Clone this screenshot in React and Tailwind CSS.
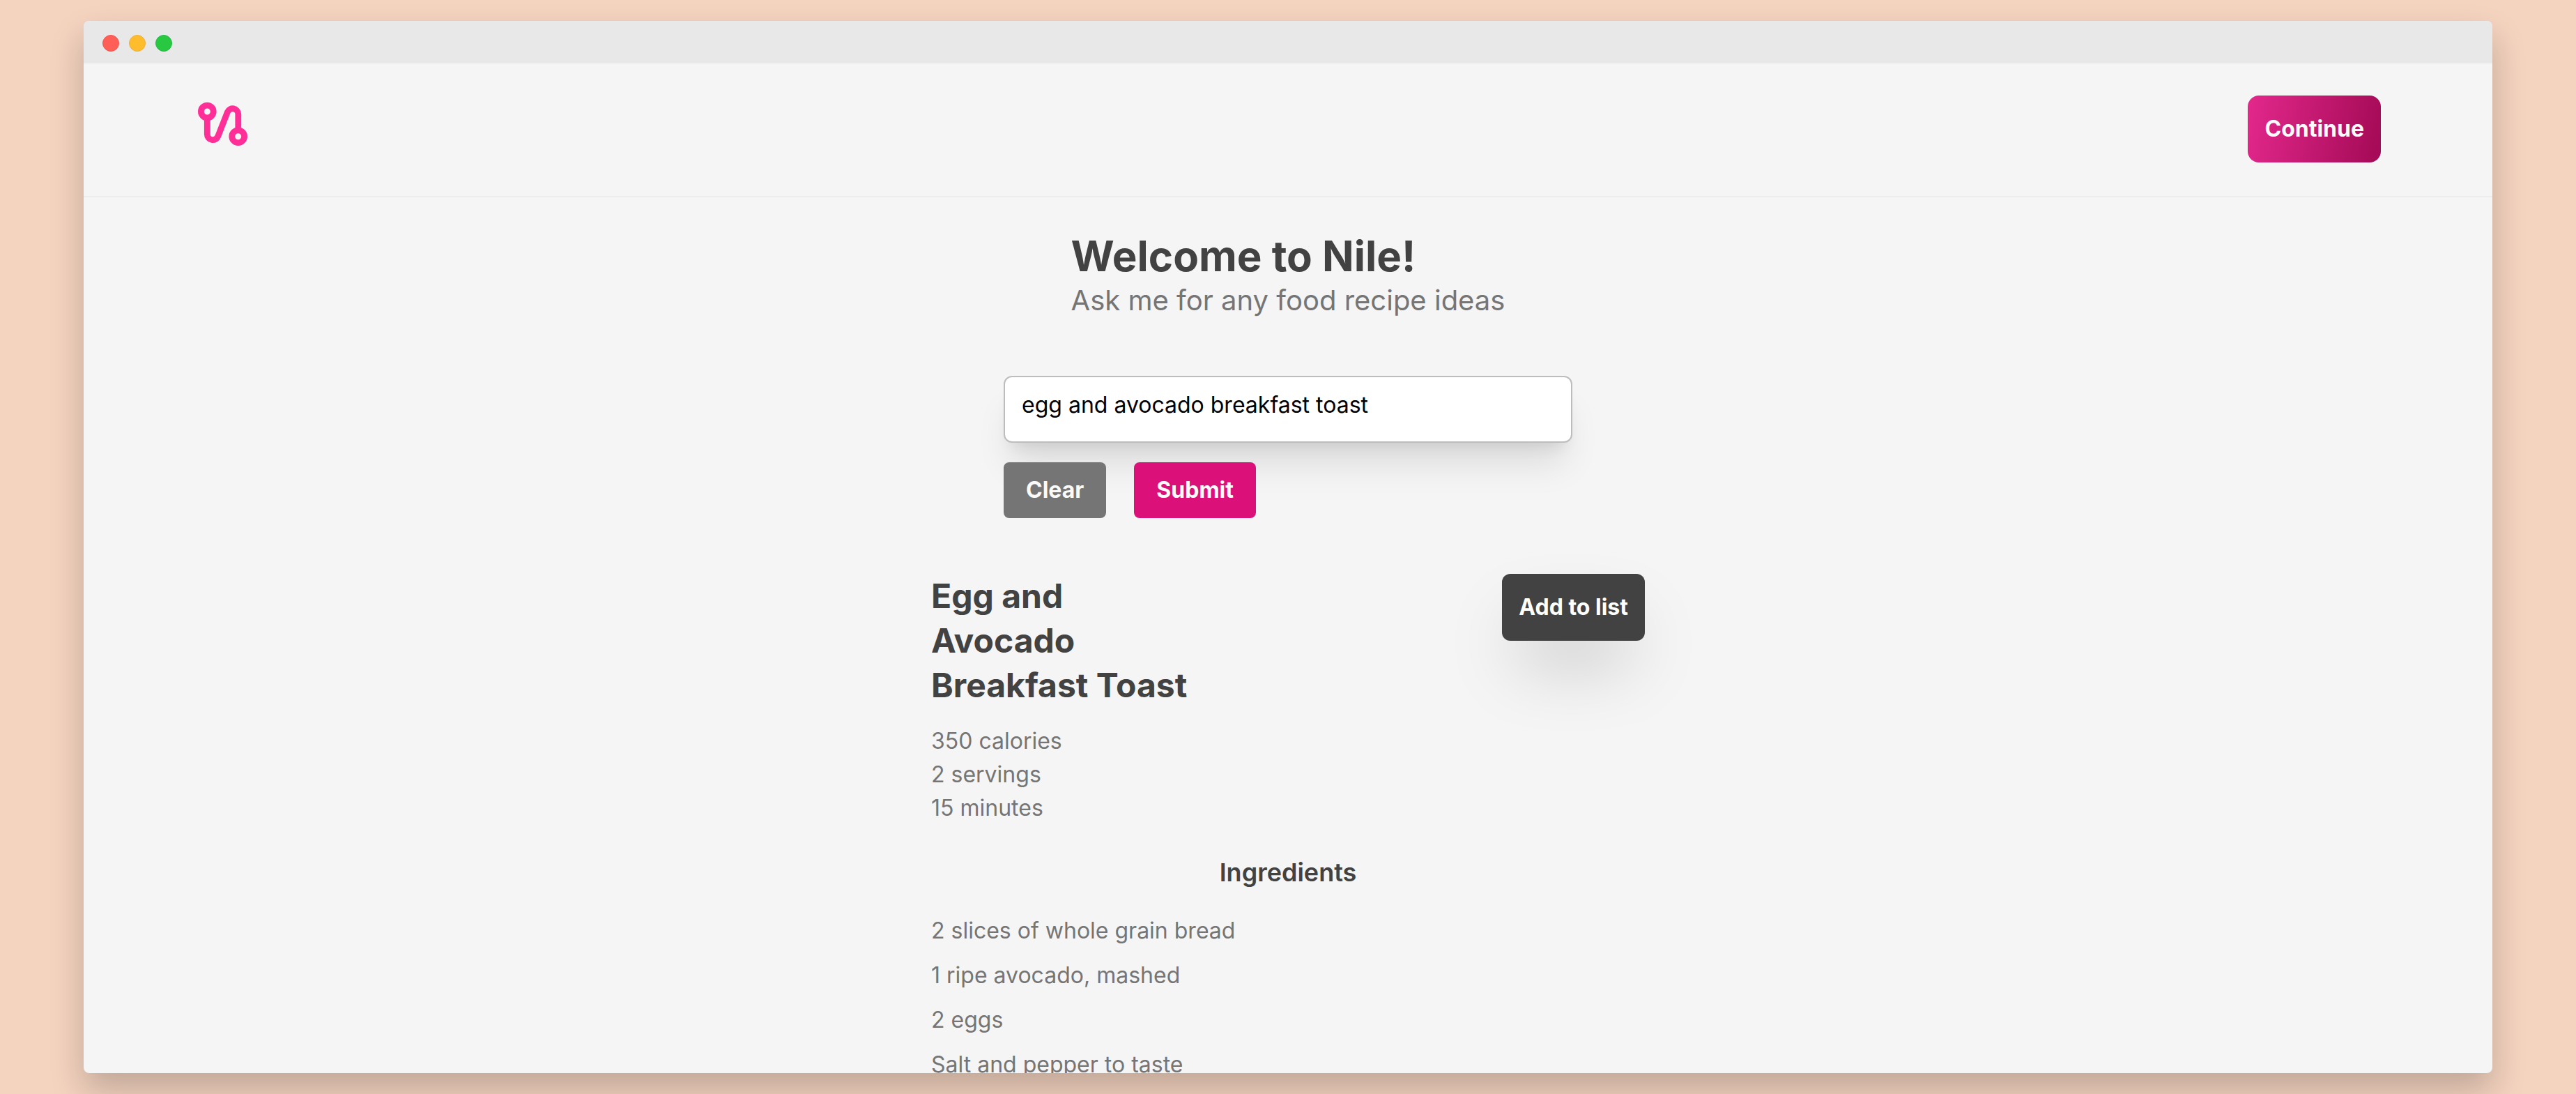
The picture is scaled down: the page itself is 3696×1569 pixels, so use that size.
import { useState } from "react";

const recipe = {
  title: "Egg and Avocado Breakfast Toast",
  facts: ["350 calories", "2 servings", "15 minutes"],
  ingredients: [
    "2 slices of whole grain bread",
    "1 ripe avocado, mashed",
    "2 eggs",
    "Salt and pepper to taste",
  ],
};

function Logo() {
  return (
    <svg
      className="w-20 h-20"
      viewBox="-4 -9 80 80"
      fill="none"
      stroke="#ff2f97"
      strokeWidth="8.8"
      role="img"
      aria-label="Nile"
    >
      <circle cx="13.3" cy="14" r="8.9" />
      <circle cx="57.7" cy="49.7" r="8.9" />
      <path d="M13.3 23V46.6A8 8 0 0 0 28.8 49.4L42.5 14.5A8 8 0 0 1 57.8 17.4V41" />
    </svg>
  );
}

function TitleBar() {
  return (
    <div className="flex shrink-0 h-[61px] bg-[#e8e8e8] pt-5 pl-[27px] gap-[14px]">
      <span className="h-6 w-6 rounded-full bg-[#ff5f57] border border-[#f0564e]" />
      <span className="h-6 w-6 rounded-full bg-[#ffbd2e] border border-[#eeaf3c]" />
      <span className="h-6 w-6 rounded-full bg-[#28c940] border border-[#22b948]" />
    </div>
  );
}

function Header() {
  return (
    <header className="flex shrink-0 justify-between items-start px-40 pt-[46px] pb-12 border-b-2 border-[#eeeeee]">
      <Logo />
      <button className="rounded-2xl px-6 py-6 font-bold text-[#fafafa] bg-linear-[100deg] from-[#e3288c] to-[#a30a55]">
        Continue
      </button>
    </header>
  );
}

function PromptForm() {
  const [prompt, setPrompt] = useState("egg and avocado breakfast toast");

  const handleSubmit = (event) => {
    event.preventDefault();
  };

  return (
    <form
      className="w-full max-w-[816px] mt-20 flex flex-col gap-7"
      onSubmit={handleSubmit}
    >
      <textarea
        aria-label="Recipe idea"
        className="block w-full h-24 px-6 py-4 rounded-xl border-2 border-[#bdbdbd] bg-white text-black outline-none resize-none overflow-hidden shadow-[0_40px_50px_-10px_rgba(0,0,0,0.1),0_16px_20px_-12px_rgba(0,0,0,0.1)]"
        value={prompt}
        onChange={(event) => setPrompt(event.target.value)}
      />
      <div className="relative flex gap-10">
        <button
          type="button"
          className="rounded-lg px-8 py-4 font-bold text-[#fafafa] bg-[#757575]"
          onClick={() => setPrompt("")}
        >
          Clear
        </button>
        <button
          type="submit"
          className="rounded-lg px-8 py-4 font-bold text-[#fafafa] bg-[#db1079]"
        >
          Submit
        </button>
      </div>
    </form>
  );
}

function Recipe() {
  return (
    <section className="w-full max-w-5xl mt-20">
      <div className="flex justify-between items-start">
        <div>
          <h2 className="w-96 text-[48px] leading-16 font-bold text-[#424242]">
            {recipe.title}
          </h2>
          <ul className="mt-6">
            {recipe.facts.map((fact) => (
              <li key={fact}>{fact}</li>
            ))}
          </ul>
        </div>
        <button className="rounded-xl px-6 py-6 font-bold text-white bg-[#424242] shadow-[0_50px_100px_-24px_rgba(0,0,0,0.25)]">
          Add to list
        </button>
      </div>
      <h3 className="mt-10 text-center text-[36px] leading-14 font-semibold text-[#424242]">
        Ingredients
      </h3>
      <ul className="mt-8 flex flex-col gap-4">
        {recipe.ingredients.map((ingredient) => (
          <li key={ingredient}>{ingredient}</li>
        ))}
      </ul>
    </section>
  );
}

export default function App() {
  return (
    <div className="h-screen px-[120px] py-[30px] overflow-hidden bg-[#f4d3bf] font-['Inter',sans-serif] text-[32px] leading-12 text-[#757575]">
      <div className="h-full flex flex-col overflow-hidden rounded-lg bg-[#f5f5f5] shadow-[0_24px_48px_rgba(0,0,0,0.21)]">
        <TitleBar />
        <Header />
        <main className="flex-1 min-h-0 overflow-hidden flex flex-col items-center pt-12">
          <div>
            <h1 className="text-[60px] leading-18 font-bold text-[#424242]">
              Welcome to Nile!
            </h1>
            <p className="text-[40px] leading-14">
              Ask me for any food recipe ideas
            </p>
          </div>
          <PromptForm />
          <Recipe />
        </main>
      </div>
    </div>
  );
}
